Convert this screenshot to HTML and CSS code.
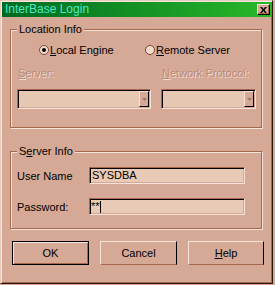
FILE: index.html
```html
<!DOCTYPE html>
<html>
<head>
<meta charset="utf-8">
<link rel="stylesheet" href="styles.css">
</head>
<body>
<div class="window">
  <div class="titlebar">
    <span class="title">InterBase Login</span>
    <span class="close"><svg width="7" height="6" viewBox="0 0 7 6"><path d="M0 0h2l1.5 2L5 0h2L4.5 3L7 6H5L3.5 4L2 6H0l2.5-3z" fill="#000"/></svg></span>
  </div>
  <div class="content">
    <fieldset class="group group-location">
      <legend><span>Location Info</span></legend>
      <div class="radios">
        <div class="radio radio-first">
          <svg width="10" height="10" viewBox="0 0 10 10"><circle cx="5" cy="5" r="4.5" fill="#f2dcd0" stroke="#7a4a3a"/><circle cx="5" cy="5" r="2" fill="#000"/></svg>
          <span><u>L</u>ocal Engine</span>
        </div>
        <div class="radio">
          <svg width="10" height="10" viewBox="0 0 10 10"><circle cx="5" cy="5" r="4.5" fill="#f2dcd0" stroke="#7a4a3a"/></svg>
          <span><u>R</u>emote Server</span>
        </div>
      </div>
      <div class="server-grid">
        <span class="dlabel"><u>S</u>erver:</span>
        <span class="dlabel"><u>N</u>etwork Protocol:</span>
        <div class="combo"><span class="drop"><svg width="5" height="3" viewBox="0 0 5 3"><path d="M0 0h5L2.5 3z" fill="#a87464"/></svg></span></div>
        <div class="combo"><span class="drop"><svg width="5" height="3" viewBox="0 0 5 3"><path d="M0 0h5L2.5 3z" fill="#a87464"/></svg></span></div>
      </div>
    </fieldset>
    <fieldset class="group group-server">
      <legend><span>S<u>e</u>rver Info</span></legend>
      <div class="fields">
        <div class="field-row">
          <span class="flabel">User Name</span>
          <div class="input">SYSDBA</div>
        </div>
        <div class="field-row">
          <span class="flabel">Password:</span>
          <div class="input input-pass"><span class="stars">**</span><span class="caret"></span></div>
        </div>
      </div>
    </fieldset>
    <div class="buttons">
      <div class="btn btn-default">OK</div>
      <div class="btn btn-plain">Cancel</div>
      <div class="btn btn-plain btn-help"><span><u>H</u>elp</span></div>
    </div>
  </div>
</div>
</body>
</html>
```
FILE: styles.css
```css
html, body {
  margin: 0;
  background: #d5a995;
}
body {
  font-family: "Liberation Sans", Arial, sans-serif;
  font-size: 11px;
  color: #000;
}
.window {
  width: 273px;
  height: 284px;
  box-sizing: border-box;
  border: 1px solid;
  border-color: #e8cbbd #2a1810 #2a1810 #e8cbbd;
  box-shadow: inset 1px 1px 0 #f8e8e0, inset -1px -1px 0 #a8664c;
  padding: 1px;
  display: flex;
  flex-direction: column;
}
.titlebar {
  height: 15px;
  flex: none;
  background: linear-gradient(to right, #006a22, #28b828);
  display: flex;
  align-items: center;
  justify-content: space-between;
  padding: 0 1px 0 3px;
}
.title {
  color: #48ecc4;
  font-size: 12px;
  line-height: 15px;
}
.close {
  width: 13px;
  height: 11px;
  box-sizing: border-box;
  background: #d5a995;
  border: 1px solid;
  border-color: #f8e8e0 #000 #000 #f8e8e0;
  box-shadow: inset -1px -1px 0 #a8664c;
  display: flex;
  align-items: center;
  justify-content: center;
}
.close svg { display: block; }
.content {
  padding: 6px 0 0 8px;
  display: flex;
  flex-direction: column;
}
.group {
  margin: 0;
  width: 252px;
  min-inline-size: 0;
  box-sizing: border-box;
  border: 1px solid #a8664c;
  box-shadow: 1px 1px 0 #f6e2d8, inset 1px 1px 0 #f6e2d8;
}
.group legend {
  padding: 0 2px;
  line-height: 13px;
  background: #d5a995;
}
.group-location {
  padding: 8px 0 18px 6px;
}
.group-server {
  margin-top: 17px;
  padding: 9px 0 13px 6px;
}
.radios {
  display: flex;
  align-items: center;
  height: 12px;
  padding-left: 22px;
}
.radio {
  display: flex;
  align-items: center;
  gap: 1px;
  line-height: 12px;
}
.radio svg { display: block; }
.radio-first { width: 106px; }
.server-grid {
  margin-top: 11px;
  display: grid;
  grid-template-columns: 134px 95px;
  grid-template-rows: 12px 20px;
  column-gap: 10px;
  row-gap: 10px;
}
.dlabel {
  line-height: 12px;
  padding-left: 1px;
  color: #b88a78;
  text-shadow: 1px 1px 0 #f3dcd2;
}
.combo {
  box-sizing: border-box;
  height: 20px;
  background: #e6c8b2;
  border: 1px solid;
  border-color: #a8664c #f6e2d8 #f6e2d8 #a8664c;
  box-shadow: inset 1px 1px 0 #000, inset -1px -1px 0 #d5a995;
  padding: 1px;
  display: flex;
  justify-content: flex-end;
}
.drop {
  width: 10px;
  height: 16px;
  box-sizing: border-box;
  background: #d5a995;
  border: 1px solid;
  border-color: #f6e2d8 #000 #000 #f6e2d8;
  display: flex;
  align-items: center;
  justify-content: center;
}
.drop svg { display: block; }
.fields {
  display: flex;
  flex-direction: column;
  gap: 14px;
}
.field-row {
  display: flex;
  align-items: center;
  height: 17px;
}
.flabel {
  width: 72px;
  line-height: 12px;
}
.input {
  width: 156px;
  height: 17px;
  box-sizing: border-box;
  background: #e8cab6;
  border: 1px solid;
  border-color: #a8664c #f6e2d8 #f6e2d8 #a8664c;
  box-shadow: inset 1px 1px 0 #000, inset -1px -1px 0 #d5a995;
  padding-left: 2px;
  line-height: 15px;
  display: flex;
  align-items: center;
}
.input-pass {
  padding-left: 1px;
}
.stars {
  line-height: 13px;
}
.caret {
  width: 1px;
  height: 12px;
  background: #000;
  margin-left: 0;
}
.buttons {
  display: flex;
  gap: 11px;
  margin: 12px 0 0 2px;
}
.btn {
  box-sizing: border-box;
  width: 77px;
  height: 24px;
  display: flex;
  align-items: center;
  justify-content: center;
  line-height: 12px;
}
.btn-default {
  border: 1px solid #000;
  box-shadow: inset 1px 1px 0 #f6e2d8, inset -1px -1px 0 #a8664c;
}
.btn-plain {
  border: 1px solid;
  border-color: #f6e2d8 #000 #a8664c #f6e2d8;
}
.btn-help {
  width: 76px;
}
```
